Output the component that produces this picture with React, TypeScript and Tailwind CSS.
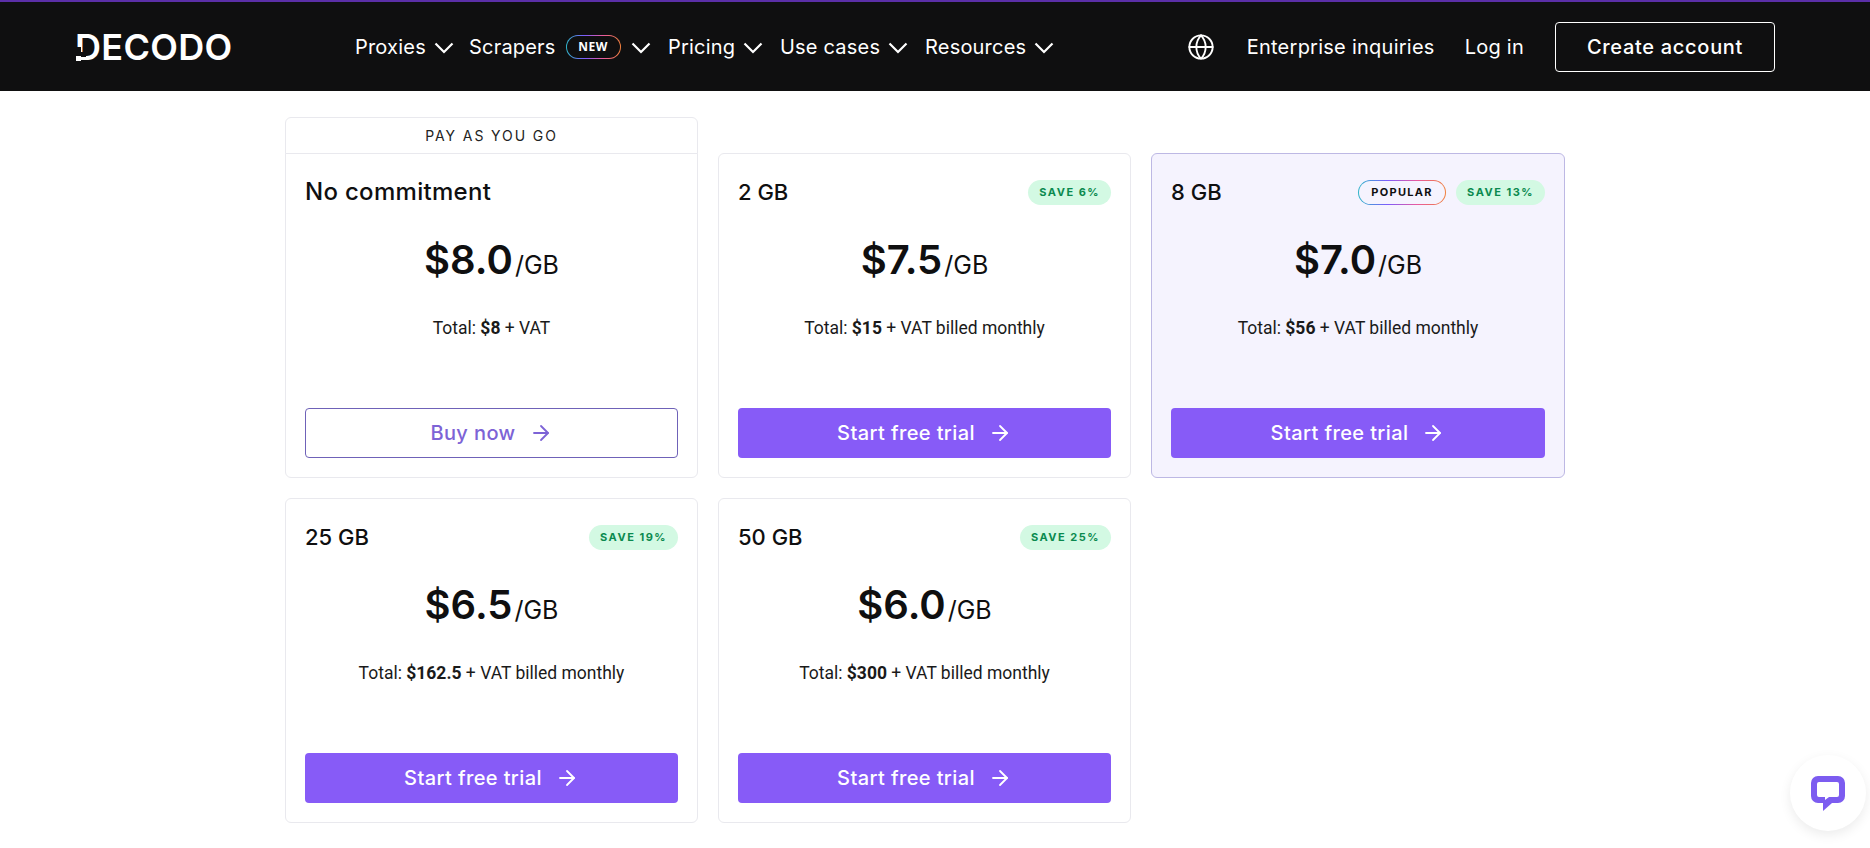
import { Globe, ArrowRight } from "lucide-react";

const sans = "font-['Inter','Liberation_Sans',sans-serif]";

const plans = [
  { name: "No commitment", save: "", price: "$8.0", total: "$8", billed: false, cta: "Buy now" },
  { name: "2 GB", save: "SAVE 6%", price: "$7.5", total: "$15", billed: true, cta: "Start free trial" },
  { name: "8 GB", save: "SAVE 13%", price: "$7.0", total: "$56", billed: true, cta: "Start free trial", popular: true },
  { name: "25 GB", save: "SAVE 19%", price: "$6.5", total: "$162.5", billed: true, cta: "Start free trial" },
  { name: "50 GB", save: "SAVE 25%", price: "$6.0", total: "$300", billed: true, cta: "Start free trial" },
];

const Chevron = () => (
  <svg width="20" height="12" viewBox="0 0 20 12" fill="none" stroke="currentColor" strokeWidth="2.2" className="shrink-0 mt-[2px]">
    <path d="M1.5 1.5L10 10L18.5 1.5" />
  </svg>
);

const Logo = () => (
  <div className="relative w-[160px] h-[32px] flex items-center">
    <span className="font-['Inter',sans-serif] font-semibold text-[36px] leading-none tracking-[0.3px] text-white">DECODO</span>
    <span className="absolute left-0 top-[16px] w-[6px] h-[5px] bg-[#0f0f10]" />
    <span className="absolute left-[6px] top-[21px] w-[5px] h-[5px] bg-[#0f0f10]" />
    <span className="absolute left-0 top-[21px] w-[6px] h-[6px] bg-[#0f0f10]" />
    <span className="absolute left-[1px] top-[25px] w-[5px] h-[5px] bg-white" />
  </div>
);

const Header = () => (
  <header className="h-[91px] bg-[#0f0f10] border-t-2 border-[#5b2fa8] flex items-center text-white">
    <div className="ml-[75px] w-[280px]">
      <Logo />
    </div>
    <nav className={`flex items-center text-[20px] tracking-[0.2px] ${sans}`}>
      <div className="flex items-center w-[114px] gap-2">Proxies<Chevron /></div>
      <div className="flex items-center w-[199px]">
        Scrapers
        <span className="ml-[10px] rounded-full p-px bg-[linear-gradient(90deg,#2fb6c9,#7c5cfc,#e85aa0,#f0803c)]">
          <span className="flex items-center justify-center w-[53px] h-[22px] rounded-full bg-[#0f0f10] font-['Open_Sans',sans-serif] font-bold text-[12px] tracking-[0.5px]">NEW</span>
        </span>
        <span className="ml-[10px] flex"><Chevron /></span>
      </div>
      <div className="flex items-center w-[112px] gap-2">Pricing<Chevron /></div>
      <div className="flex items-center w-[145px] gap-2">Use cases<Chevron /></div>
      <div className="flex items-center gap-2">Resources<Chevron /></div>
    </nav>
    <div className={`ml-auto mr-[95px] flex items-center text-[20px] tracking-[0.25px] ${sans}`}>
      <Globe className="w-[28px] h-[28px] mr-[32px]" strokeWidth={1.6} />
      <span className="mr-[30px]">Enterprise inquiries</span>
      <span className="mr-[31px]">Log in</span>
      <span className="w-[220px] h-[50px] rounded border border-white flex items-center justify-center font-medium tracking-[0.7px]">Create account</span>
    </div>
  </header>
);

type Plan = (typeof plans)[number] & { popular?: boolean };

const PlanCard = ({ plan, first }: { plan: Plan; first?: boolean }) => (
  <div className={`relative h-[325px] rounded-md border flex flex-col p-[19px] ${first ? "rounded-t-none" : ""} ${plan.popular ? "bg-[#f5f3fe] border-[#bdb8e4]" : "bg-white border-[#e9e9ee]"}`}>
    {first && (
      <div className={`absolute left-[-1px] right-[-1px] top-[-37px] h-[37px] border border-[#e9e9ee] rounded-t-md bg-white flex items-center justify-center text-[14px] tracking-[1.9px] text-[#222] ${sans}`}>
        PAY AS YOU GO
      </div>
    )}
    <div className="flex items-center justify-between h-[38px]">
      <span className={first ? `${sans} font-medium text-[24px] tracking-[0.3px] text-[#0f0f10]` : `${sans} font-medium text-[22px] text-[#0f0f10]`}>{plan.name}</span>
      <div className="flex items-center gap-[10px]">
        {plan.popular && (
          <span className="rounded-full p-px bg-[linear-gradient(90deg,#2fb6c9,#7c5cfc,#e85aa0,#f0803c)]">
            <span className={`flex items-center justify-center w-[86px] h-[23px] rounded-full bg-[#f5f3fe] font-bold text-[11px] tracking-[1.3px] text-[#0f0f10] ${sans}`}>POPULAR</span>
          </span>
        )}
        {plan.save && (
          <span className={`h-[25px] px-[11px] rounded-full bg-[#d3f9e3] flex items-center font-bold text-[11px] tracking-[1.5px] text-[#0b8a4f] ${sans}`}>{plan.save}</span>
        )}
      </div>
    </div>
    <div className={`mt-[25px] flex items-baseline justify-center text-[#0f0f10] ${sans}`}>
      <span className="font-semibold text-[40px] leading-[48px]">{plan.price}</span>
      <span className="ml-[2px] text-[25px] leading-[48px]">/GB</span>
    </div>
    <p className="mt-[27px] text-center font-['Roboto',sans-serif] text-[17.5px] leading-6 text-[#1a1a1a]">
      Total: <b className="font-bold">{plan.total}</b> + VAT{plan.billed ? " billed monthly" : ""}
    </p>
    {plan.cta === "Buy now" ? (
      <div className={`mt-auto h-[50px] rounded border border-[#6f62b8] flex items-center justify-center gap-[13px] font-medium text-[20px] tracking-[0.4px] text-[#7d63d6] ${sans}`}>
        Buy now <ArrowRight className="w-6 h-6" strokeWidth={1.8} />
      </div>
    ) : (
      <div className={`mt-auto h-[50px] rounded bg-[#875bf7] flex items-center justify-center gap-[13px] font-medium text-[20px] tracking-[0.4px] text-white ${sans}`}>
        {plan.cta} <ArrowRight className="w-6 h-6" strokeWidth={1.8} />
      </div>
    )}
  </div>
);

export default function App() {
  return (
    <div className="min-h-screen bg-white overflow-hidden">
      <Header />
      <main className="ml-[285px] w-[1280px] pt-[62px] grid grid-cols-[413px_413px_414px] gap-5">
        {plans.map((plan, i) => (
          <PlanCard key={plan.name} plan={plan} first={i === 0} />
        ))}
      </main>
      <div className="fixed right-[4px] bottom-[17px] w-[76px] h-[76px] rounded-full bg-white shadow-[0_4px_12px_rgba(0,0,0,0.08)] flex items-center justify-center">
        <svg width="38" height="38" viewBox="0 0 38 38" fill="none">
          <path d="M9 2h20a7 7 0 0 1 7 7v13a7 7 0 0 1-7 7h-6l-9 8v-8H9a7 7 0 0 1-7-7V9a7 7 0 0 1 7-7z" fill="#7c5cf0" />
          <path d="M10 8h18a2 2 0 0 1 2 2v11a2 2 0 0 1-2 2h-8l-4 3v-3h-6a2 2 0 0 1-2-2V10a2 2 0 0 1 2-2z" fill="#fff" />
        </svg>
      </div>
    </div>
  );
}
